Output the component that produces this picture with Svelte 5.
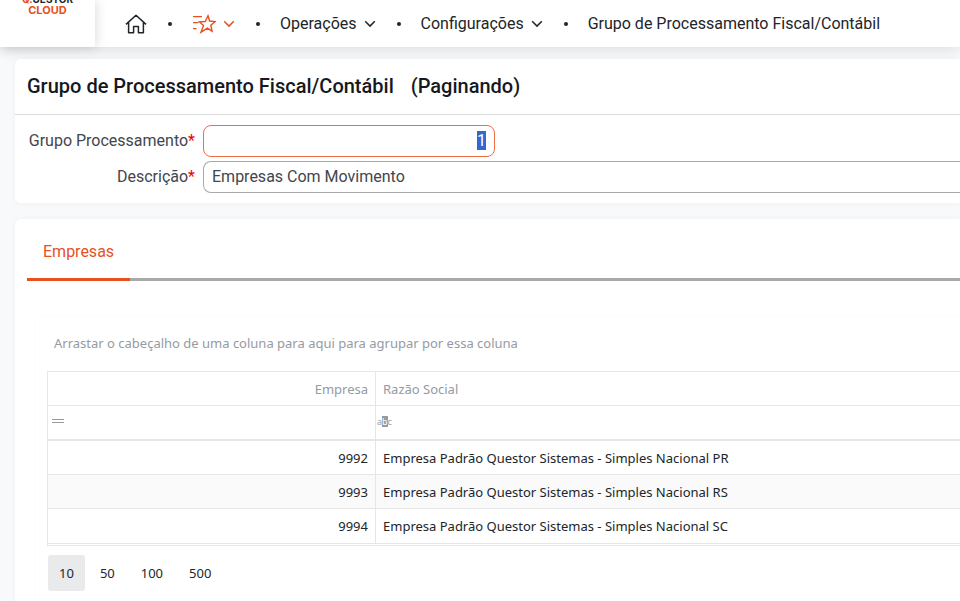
<script>
import { onMount } from 'svelte';

let grupo = $state('1');
let descricao = $state('Empresas Com Movimento');
let pageSize = $state(10);
let grupoInput;

const menus = ['Operações', 'Configurações'];
const pageSizes = [10, 50, 100, 500];
const rows = [
  { empresa: 9992, razao: 'Empresa Padrão Questor Sistemas - Simples Nacional PR' },
  { empresa: 9993, razao: 'Empresa Padrão Questor Sistemas - Simples Nacional RS' },
  { empresa: 9994, razao: 'Empresa Padrão Questor Sistemas - Simples Nacional SC' },
];

onMount(() => {
  grupoInput.focus();
  grupoInput.select();
});
</script>

{#snippet chevron()}
  <svg class="chevron" width="12" height="8" viewBox="0 0 12 8" aria-hidden="true">
    <path d="M1.2 1.3 6 6.1l4.8-4.8" fill="none" stroke="currentColor" stroke-width="1.5" />
  </svg>
{/snippet}

<header class="topbar">
  <a class="logo" href="#inicio" aria-label="Questor Cloud">
    <span class="brand"><span class="accent">Q.</span>UESTOR</span>
    <span class="cloud">CLOUD</span>
  </a>
  <nav class="menu">
    <a class="home" href="#home" aria-label="Início">
      <svg width="22" height="20" viewBox="0 0 22 20" aria-hidden="true">
        <path d="M1 10.4 11 1.2l10 9.2M3.6 8.5v10.3h5v-6.2h4.8v6.2h5V8.5" fill="none" stroke="currentColor" stroke-width="1.5" stroke-linejoin="round" />
      </svg>
    </a>
    <i class="dot"></i>
    <button class="favorites" aria-label="Favoritos">
      <svg width="24" height="20" viewBox="0 0 24 20" aria-hidden="true">
        <path d="M1 2.6h9M1 8.6h5.5M1 14.6h3.5" fill="none" stroke="currentColor" stroke-width="1.4" />
        <path d="m16 1.8 1.6 5.2 5.6.6-4.4 3.6 1.3 6-4.8-3.1-6.3 4.2 2.5-6.8-4-3.6 5.7-.4z" fill="none" stroke="currentColor" stroke-width="1.4" />
      </svg>
      {@render chevron()}
    </button>
    <i class="dot"></i>
    {#each menus as menu}
      <button>{menu}{@render chevron()}</button>
      <i class="dot"></i>
    {/each}
    <a href="#grupo">Grupo de Processamento Fiscal/Contábil</a>
  </nav>
</header>

<main>
  <section class="card">
    <h1>Grupo de Processamento Fiscal/Contábil <span>(Paginando)</span></h1>
    <div class="form">
      <label for="grupo">Grupo Processamento<b>*</b></label>
      <input id="grupo" class="code" type="text" bind:value={grupo} bind:this={grupoInput} />
      <label for="descricao">Descrição<b>*</b></label>
      <input id="descricao" class="wide" type="text" bind:value={descricao} />
    </div>
  </section>

  <section class="card details">
    <div class="tabs" role="tablist">
      <button class="tab" role="tab" aria-selected="true">Empresas</button>
    </div>
    <div class="panel">
      <p class="group-hint">Arrastar o cabeçalho de uma coluna para aqui para agrupar por essa coluna</p>
      <table>
        <thead>
          <tr>
            <th class="num">Empresa</th>
            <th>Razão Social</th>
          </tr>
          <tr class="filters">
            <td>
              <button aria-label="Igual a">
                <svg width="12" height="6" viewBox="0 0 12 6" aria-hidden="true">
                  <path d="M0 1.5h12M0 4.5h12" stroke="currentColor" />
                </svg>
              </button>
            </td>
            <td><button class="abc" aria-label="Contém">a<span>b</span>c</button></td>
          </tr>
        </thead>
        <tbody>
          {#each rows as row}
            <tr>
              <td class="num">{row.empresa}</td>
              <td>{row.razao}</td>
            </tr>
          {/each}
        </tbody>
      </table>
      <div class="pager">
        {#each pageSizes as size}
          <button class:active={size === pageSize} onclick={() => (pageSize = size)}>{size}</button>
        {/each}
      </div>
    </div>
  </section>
</main>

<style>
:global(body) {
  margin: 0;
  background: #f8f9fb;
  color: #212529;
  font: 16px/20px Roboto, sans-serif;
  overflow: hidden;
}

button {
  padding: 0;
  border: 0;
  background: none;
  color: inherit;
  font: inherit;
  cursor: pointer;
}

a {
  color: inherit;
  text-decoration: none;
}

.topbar {
  display: flex;
  height: 47px;
  background: #fff;
  box-shadow: 0 2px 14px rgba(0, 0, 0, 0.12);
}

.logo {
  flex: none;
  display: flex;
  flex-direction: column;
  align-items: center;
  justify-content: flex-end;
  box-sizing: border-box;
  width: 95px;
  padding-bottom: 31px;
  box-shadow: 0 0 12px rgba(0, 0, 0, 0.16);
  font: 700 11px/12px Inter, sans-serif;
}

.brand {
  font-size: 10px;
  line-height: 10px;
}

.accent,
.cloud {
  color: #e8501e;
}

.menu {
  display: flex;
  align-items: center;
  padding-left: 30px;
  white-space: nowrap;
}

.menu a,
.menu button {
  display: flex;
  align-items: center;
  gap: 7px;
}

.menu .favorites {
  color: #e8501e;
}

.dot {
  width: 4px;
  height: 4px;
  margin: 0 20px 0 21px;
  border-radius: 50%;
  background: #212529;
}

main {
  display: flex;
  flex-direction: column;
  gap: 16px;
  padding: 12px 0 0 15px;
}

.card {
  background: #fff;
  border-radius: 6px 0 0 6px;
  box-shadow: 0 0 6px rgba(0, 0, 0, 0.04);
}

h1 {
  margin: 0;
  padding: 15px 12px 16px;
  border-bottom: 1px solid #dcdcdc;
  color: #16181d;
  font-size: 20px;
  font-weight: 500;
  line-height: 24px;
}

h1 span {
  margin-left: 12px;
}

.form {
  display: grid;
  grid-template-columns: 180px 1fr;
  align-items: center;
  gap: 4px 8px;
  padding: 10px 0;
}

.form label {
  color: #42464d;
  text-align: right;
}

.form b {
  color: #f00000;
  font-weight: 400;
}

.form input {
  box-sizing: border-box;
  width: 100%;
  height: 32px;
  padding: 0 8px 2px;
  border: 1px solid #a9a9a9;
  border-radius: 8px;
  background: #fff;
  color: #42464d;
  font: inherit;
  outline: none;
}

.form .code {
  width: 292px;
  text-align: right;
}

.form .wide {
  border-right: 0;
  border-radius: 8px 0 0 8px;
}

.form input:focus {
  border-color: #ec6f46;
}

.form input::selection {
  background: #3367d1;
  color: #fff;
}

.details {
  min-height: 400px;
  padding: 12px 0 0 12px;
}

.tabs {
  display: flex;
  border-bottom: 3px solid #a9a9a9;
}

.tab {
  margin-bottom: -3px;
  padding: 11px 16px 16px;
  border-bottom: 3px solid #e8501e;
  color: #e8501e;
}

/* grid area */
.panel {
  margin: 36px 0 0 8px;
  padding: 16px 0 12px 12px;
  border-radius: 6px 0 0 6px;
  box-shadow: 0 0 2px rgba(0, 0, 0, 0.06);
  font: 13px/20px "Noto Sans", sans-serif;
}

.group-hint {
  margin: 0 0 18px 7px;
  color: #959ba3;
}

table {
  width: 100%;
  table-layout: fixed;
  border-collapse: separate;
  border-spacing: 0;
  border: 1px solid #e6e6e6;
  border-right: 0;
  padding-bottom: 1px;
}

th,
td {
  height: 33px;
  padding: 0 7px;
  border-bottom: 1px solid #e6e6e6;
  text-align: left;
  font-weight: 400;
}

th:first-child,
td:first-child {
  border-right: 1px solid #e6e6e6;
}

th:first-child {
  width: 313px;
}

th {
  color: #959ba3;
}

.num,
th.num {
  text-align: right;
}

.filters td {
  padding: 0 4px 4px;
  height: 29px;
  border-bottom-width: 2px;
}

.filters td:last-child {
  padding: 0 1px 2px;
  height: 31px;
}

.filters button {
  display: flex;
  align-items: center;
  height: 20px;
  color: #959ba3;
}

.filters .abc {
  font-size: 9px;
  line-height: 11px;
}

.abc span {
  background: #959ba3;
  color: #fff;
}

tbody tr:nth-child(even) {
  background: #fafafa;
}

tbody tr:last-child td {
  height: 34px;
}

.pager {
  display: flex;
  gap: 4px;
  padding: 9px 1px 0;
}

.pager button {
  height: 36px;
  padding: 0 11px;
  border-radius: 3px;
}

.pager .active {
  background: #e9eaec;
}
</style>
